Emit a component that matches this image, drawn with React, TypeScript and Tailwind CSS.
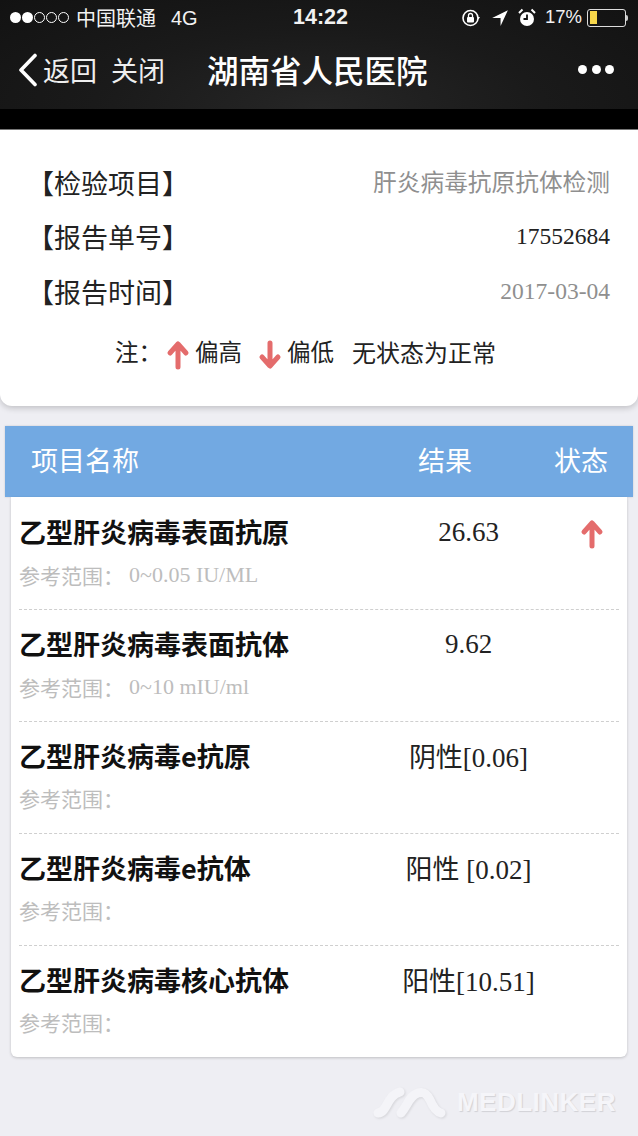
const cjk = "font-['Noto_Sans_CJK_SC','Noto_Sans',sans-serif]";
const serif = "font-['Liberation_Serif','Noto_Sans_CJK_SC',serif]";

const rows = [
  { name: "乙型肝炎病毒表面抗原", value: "26.63", range: "0~0.05 IU/ML", high: true },
  { name: "乙型肝炎病毒表面抗体", value: "9.62", range: "0~10 mIU/ml" },
  { name: "乙型肝炎病毒e抗原", value: "阴性[0.06]", range: "", mixed: true },
  { name: "乙型肝炎病毒e抗体", value: "阳性 [0.02]", range: "", mixed: true },
  { name: "乙型肝炎病毒核心抗体", value: "阳性[10.51]", range: "", mixed: true },
];

function Arrow({ down = false }: { down?: boolean }) {
  return (
    <svg width="24" height="30" viewBox="0 0 24 30" className={down ? "rotate-180" : ""}>
      <path d="M12 27V5M4 13 12 4l8 9" fill="none" stroke="#e46c6c" strokeWidth="5" strokeLinecap="round" strokeLinejoin="round" />
    </svg>
  );
}

function StatusBar() {
  return (
    <div className="flex h-[35px] items-center px-[10px] text-[20px] leading-none text-[#f2f2f2]">
      <div className="flex w-[65px] items-center gap-[1px]">
        <span className="size-[11px] rounded-full bg-white" />
        <span className="size-[11px] rounded-full bg-white" />
        <span className="size-[11px] rounded-full border border-white" />
        <span className="size-[11px] rounded-full border border-white" />
        <span className="size-[11px] rounded-full border border-white" />
      </div>
      <span className="ml-[1px]">中国联通</span>
      <span className="ml-[15px] w-[122px] font-['Liberation_Sans'] text-[20px]">4G</span>
      <span className="font-['Liberation_Sans'] text-[21.500px] font-bold">14:22</span>
      <div className="ml-auto flex items-center">
        <svg width="20" height="20" viewBox="0 0 20 20" className="mr-[10px]">
          <circle cx="9.500" cy="10" r="7.500" fill="none" stroke="#fff" strokeWidth="1.600" />
          <rect x="6" y="9" width="7" height="5.500" rx="1" fill="#fff" />
          <path d="M7.500 9V7.500a2 2 0 0 1 4 0V9" fill="none" stroke="#fff" strokeWidth="1.300" />
          <path d="m16 9 3 0-1.500 2.500z" fill="#fff" />
        </svg>
        <svg width="18" height="18" viewBox="0 0 16 16" className="mr-[9px]">
          <path d="M15 1 8.500 15V8H1z" fill="#fff" />
        </svg>
        <svg width="18" height="20" viewBox="0 0 18 20" className="mr-[9px]">
          <circle cx="9" cy="11" r="7" fill="#fff" />
          <path d="M9 6.500V11H5.500" fill="none" stroke="#111" strokeWidth="1.800" />
          <path d="M1 5 4.500 1.500M17 5l-3.500-3.500" stroke="#fff" strokeWidth="2" />
        </svg>
        <span className="font-['Liberation_Sans'] text-[18.500px]">17%</span>
        <div className="ml-[5px] flex items-center">
          <div className="h-[18px] w-[39px] rounded-[3px] border border-[#ddd] p-[1.500px]">
            <div className="h-full w-[7px] bg-[#f6d64a]" />
          </div>
          <div className="h-[6px] w-[2px] rounded-r-sm bg-[#ccc]" />
        </div>
      </div>
    </div>
  );
}

function NavBar() {
  return (
    <div className="flex h-[74px] items-center pb-[5px] text-white">
      <svg width="22" height="34" viewBox="0 0 22 34" className="ml-[17px]">
        <path d="M18 2.500 4 17l14 14.500" fill="none" stroke="#fff" strokeWidth="3.600" strokeLinecap="round" strokeLinejoin="round" />
      </svg>
      <span className="ml-[4px] text-[27px] leading-none text-[#eee]">返回</span>
      <span className="ml-[14px] text-[27px] leading-none text-[#eee]">关闭</span>
      <span className="ml-[42px] text-[31.500px] font-medium leading-none">湖南省人民医院</span>
      <div className="ml-auto mr-[24px] flex gap-[4.500px]">
        <span className="size-[9px] rounded-full bg-white" />
        <span className="size-[9px] rounded-full bg-white" />
        <span className="size-[9px] rounded-full bg-white" />
      </div>
    </div>
  );
}

function InfoRow({ label, children }: { label: string; children: React.ReactNode }) {
  return (
    <div className="flex h-[54.500px] items-center justify-between pl-[27px] pr-[28px]">
      <span className="text-[27px] leading-none text-[#222]">【{label}】</span>
      {children}
    </div>
  );
}

function ResultRow({ row, last }: { row: (typeof rows)[number]; last: boolean }) {
  return (
    <div className={`mx-[8px] h-[112px] ${last ? "" : "border-b border-dashed border-[#cfcfcf]"}`}>
      <div className="flex h-[66px] items-center">
        <span className="mt-[1px] w-[356px] text-[27px] font-bold leading-none text-[#111]">{row.name}</span>
        <span className={`${serif} ${row.mixed ? "mt-[6px]" : "mt-[2px]"} w-[187px] text-center text-[27px] leading-none text-[#222]`}>
          {row.value}
        </span>
        {row.high && <span className="ml-[18px] mt-[6px] flex"><Arrow /></span>}
      </div>
      <div className="flex items-center text-[21px] leading-none text-[#bdbdbd]">
        <span className="w-[110px]">参考范围：</span>
        <span className={`${serif} text-[22px]`}>{row.range}</span>
      </div>
    </div>
  );
}

function Logo() {
  return (
    <svg width="78" height="36" viewBox="0 0 78 36" className="mr-[8px] drop-shadow-[1px_1px_1px_rgba(0,0,0,0.1)]">
      <path
        d="M7 29C17 28 15 12 29 8M30 29C37 21 38 12 47 9c6-2 9 1 12 7 3 7 7 12 11 13"
        fill="none"
        stroke="#f4f4f8"
        strokeWidth="9"
        strokeLinecap="round"
      />
    </svg>
  );
}

export default function App() {
  return (
    <div className={`${cjk} h-[1136px] w-[638px] overflow-hidden bg-[#eeeef3]`}>
      <div className="h-[109px] bg-[radial-gradient(ellipse_at_50%_100%,#262626_0%,#1a1a1a_50%,#121212_100%)]">
        <StatusBar />
        <NavBar />
      </div>
      <div className="h-[20px] bg-black" />

      {/* 报告信息 */}
      <div className="h-[277px] rounded-b-[12px] border-t border-[#777] bg-white pt-[25px] shadow-[0_2px_6px_rgba(0,0,0,0.2)]">
        <InfoRow label="检验项目">
          <span className="text-[23.700px] leading-none text-[#8f8f8f]">肝炎病毒抗原抗体检测</span>
        </InfoRow>
        <InfoRow label="报告单号">
          <span className={`${serif} text-[23.500px] leading-none text-[#222]`}>17552684</span>
        </InfoRow>
        <InfoRow label="报告时间">
          <span className={`${serif} text-[23.500px] leading-none text-[#8f8f8f]`}>2017-03-04</span>
        </InfoRow>
        <div className="mt-[13.500px] flex h-[40px] items-center pl-[115px] text-[23.500px] leading-none text-[#222]">
          <span className="w-[51px]">注：</span>
          <span className="mt-[6px] flex"><Arrow /></span>
          <span className="ml-[5px]">偏高</span>
          <span className="ml-[16px] mt-[6px] flex"><Arrow down /></span>
          <span className="ml-[5px]">偏低</span>
          <span className="ml-[18px] text-[24px]">无状态为正常</span>
        </div>
      </div>

      {/* 结果表 */}
      <div className="mx-[5px] mt-[20px] flex h-[71px] items-center bg-[#72a9e2] pb-[5px] pl-[26px] text-[27px] leading-none text-white shadow-[0_0_2px_rgba(0,0,0,0.15)]">
        <span className="w-[387px]">项目名称</span>
        <span className="w-[136px]">结果</span>
        <span>状态</span>
      </div>
      <div className="mx-[11px] h-[560px] rounded-b-[6px] bg-white pt-[1px] shadow-[0_1px_3px_rgba(0,0,0,0.2)]">
        {rows.map((row, i) => (
          <ResultRow key={row.name} row={row} last={i === rows.length - 1} />
        ))}
      </div>

      <div className="mt-[27px] flex items-center justify-end pr-[22px]">
        <Logo />
        <span className="font-['Liberation_Sans'] text-[26px] font-bold leading-none tracking-[0.5px] text-[#f5f5f9] [text-shadow:1px_1px_1px_rgba(0,0,0,0.12)]">
          MEDLINKER
        </span>
      </div>
    </div>
  );
}
